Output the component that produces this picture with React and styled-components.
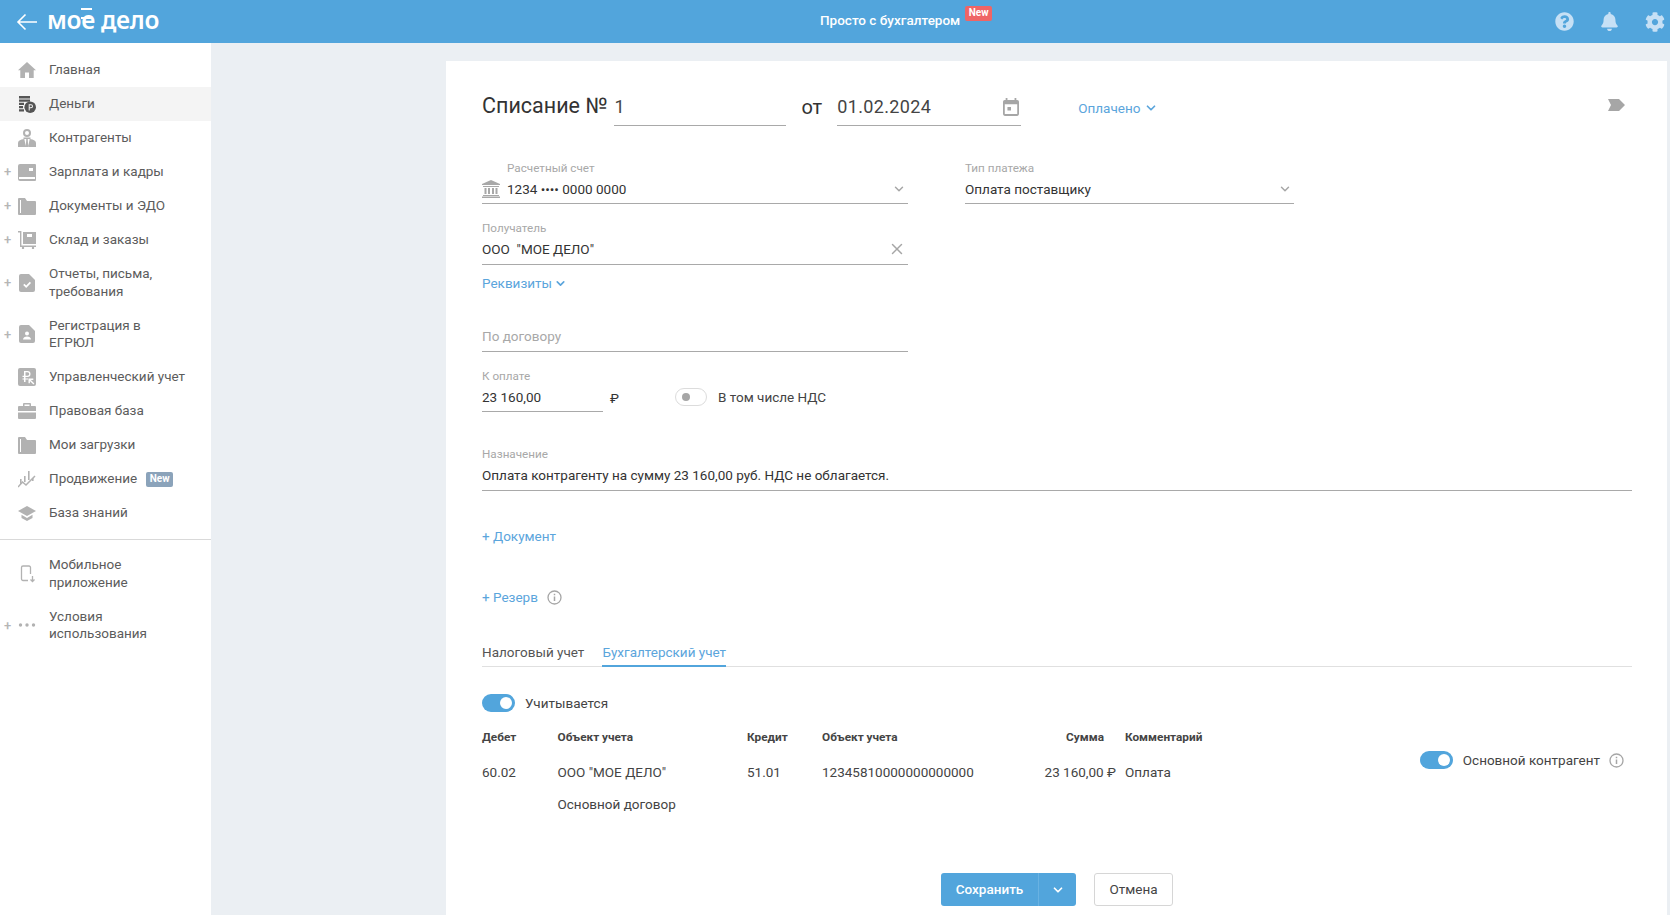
import styled, { createGlobalStyle } from "styled-components";
import { ChevronDown, X } from "lucide-react";
import { FaBell, FaCog, FaQuestionCircle } from "react-icons/fa";

const GlobalStyle = createGlobalStyle`
    html, body {
        margin: 0;
        height: 100%;
        overflow: hidden;
        font-family: Roboto, "Liberation Sans", sans-serif;
        font-size: 13.5px;
        color: #333;
    }
    * { box-sizing: border-box; }
`;

const Page = styled.div`
    width: 1670px;
    height: 915px;
    display: flex;
    flex-direction: column;
    background: #ebeff3;
`;

const Header = styled.header`
    height: 43px;
    flex: none;
    display: flex;
    align-items: center;
    background: #52a5dc;
    color: #fff;
`;

const HeaderLeft = styled.div`
    width: 820px;
    display: flex;
    align-items: center;
    padding-left: 16px;
    gap: 9px;
`;

const Logo = styled.div`
    position: relative;
    font-family: "Noto Sans", sans-serif;
    font-size: 24.5px;
    font-weight: 600;
    line-height: 36px;
    letter-spacing: -0.3px;
    margin-top: -4px;

    &::before {
        content: "";
        position: absolute;
        left: 34px;
        top: 6px;
        width: 11px;
        height: 7px;
        border-top: 2px solid #fff;
        border-bottom: 2px solid #fff;
    }
`;

const HeaderTitle = styled.div`
    font-weight: 500;
    line-height: 20px;
    margin-top: -3px;
`;

const NewBadge = styled.span`
    align-self: flex-start;
    margin: 6px 0 0 5px;
    padding: 0 3.5px;
    height: 15px;
    border-radius: 2px;
    font-size: 10px;
    font-weight: 700;
    line-height: 13px;
    background: #ef6566;
    color: #fff;
`;

const NavBadge = styled(NewBadge)`
    align-self: center;
    margin: 0 0 0 9px;
    background: #8ba3ba;
`;

const HeaderRight = styled.div`
    margin-left: auto;
    display: flex;
    align-items: center;
    gap: 26px;
    padding-right: 5px;
    color: #c6e0f5;
    font-size: 19px;

    svg { display: block; }
`;

const Body = styled.div`
    flex: 1;
    display: flex;
    min-height: 0;
`;

const Sidebar = styled.nav`
    width: 211px;
    flex: none;
    background: #fff;
    padding-top: 10px;
`;

const NavRow = styled.div`
    height: ${(p) => (p.$tall ? 51.5 : 34)}px;
    display: flex;
    align-items: center;
    background: ${(p) => (p.$active ? "#f4f4f4" : "transparent")};
    color: #5c5c5c;
    line-height: 17.5px;
`;

const Plus = styled.span`
    width: 18px;
    flex: none;
    padding-left: 4px;
    color: #b5b5b5;
    font-size: 13px;
    font-weight: 500;
`;

const NavIcon = styled.svg`
    width: 18px;
    height: 18px;
    flex: none;
    margin-right: 13px;
    fill: #b2b2b2;
`;

const NavLabel = styled.span`
    white-space: pre-line;
`;

const NavDivider = styled.div`
    height: 1px;
    margin: 9px 0 8px;
    background: #d9d9d9;
`;

const Content = styled.main`
    flex: 1;
    padding: 18px 3px 0 235px;
    min-width: 0;
`;

const Card = styled.div`
    height: 100%;
    background: #fff;
    padding: 25px 35px 0 36px;
`;

const TitleRow = styled.div`
    height: 40px;
    display: flex;
    align-items: flex-end;
`;

const Title = styled.h1`
    margin: 0 7px 0 0;
    font-size: 21.5px;
    font-weight: 400;
    line-height: 30px;
    padding-bottom: 5px;
    color: #333;
`;

const TitleInput = styled.div`
    width: ${(p) => p.$w}px;
    height: 40px;
    display: flex;
    align-items: center;
    justify-content: space-between;
    padding-top: 2px;
    font-size: 18px;
    letter-spacing: 0.35px;
    color: #444;
    border-bottom: 1px solid #a9a9a9;
`;

const From = styled.span`
    margin: 0 15px;
    font-size: 20px;
    line-height: 30px;
    padding-bottom: 4px;
`;

const CalendarIcon = styled.svg`
    width: 16px;
    height: 18px;
    margin-right: 2px;
    fill: #a6a6a6;
`;

const StatusLink = styled.a`
    display: flex;
    align-items: center;
    gap: 4px;
    margin-left: 57px;
    padding-bottom: 8px;
    color: #5ba5dc;
    line-height: 20px;
`;

const TagIcon = styled.svg`
    width: 17px;
    height: 12px;
    margin: 0 7px 15px auto;
    fill: #a6a6a6;
`;

const FieldRow = styled.div`
    display: flex;
    align-items: ${(p) => p.$align || "flex-start"};
    margin-top: ${(p) => p.$top || 0}px;
`;

const Field = styled.div`
    width: ${(p) => (p.$w ? `${p.$w}px` : "100%")};
    flex: ${(p) => (p.$w ? "none" : "1")};
    margin-top: ${(p) => p.$top || 0}px;
    margin-left: ${(p) => p.$left || 0}px;
    border-bottom: 1px solid #a9a9a9;
    padding-bottom: ${(p) => p.$pb || 4}px;
`;

const FieldLabel = styled.div`
    height: 14px;
    margin-bottom: 4px;
    margin-left: ${(p) => p.$indent || 0}px;
    font-size: 11.7px;
    line-height: 14px;
    color: #a8a8a8;
`;

const FieldValue = styled.div`
    height: 20px;
    display: flex;
    align-items: center;
    line-height: 20px;
    color: ${(p) => (p.$muted ? "#a8a8a8" : "#333")};

    > svg:last-child {
        margin-left: auto;
        margin-right: 2px;
        color: #a6a6a6;
    }
`;

const BankIcon = styled.svg`
    width: 18px;
    height: 18px;
    flex: none;
    margin-right: 7px;
    fill: #a8a8a8;
`;

const LinkLine = styled.a`
    display: flex;
    align-items: center;
    height: 20px;
    gap: ${(p) => p.$gap || 2}px;
    margin-top: ${(p) => p.$top || 0}px;
    color: #5ba5dc;
`;

const InfoIcon = styled.svg`
    width: 15px;
    height: 15px;
    flex: none;
    margin-left: ${(p) => p.$left || 0}px;
    fill: none;
    stroke: #a6a6a6;
`;

const Ruble = styled.span`
    margin-left: 7px;
    width: 65px;
    line-height: 20px;
    padding-bottom: 4px;
`;

const ToggleTrack = styled.span`
    position: relative;
    display: block;
    flex: none;
    width: ${(p) => (p.$on ? 33 : 32)}px;
    height: 18px;
    border-radius: 9px;
    margin-bottom: ${(p) => p.$mb || 0}px;
    background: ${(p) => (p.$on ? "#52a5dc" : "#fff")};
    border: ${(p) => (p.$on ? "none" : "1px solid #dcdcdc")};

    &::after {
        content: "";
        position: absolute;
        top: ${(p) => (p.$on ? 3 : 4)}px;
        left: ${(p) => (p.$on ? 18 : 6)}px;
        width: ${(p) => (p.$on ? 12 : 8)}px;
        height: ${(p) => (p.$on ? 12 : 8)}px;
        border-radius: 50%;
        background: ${(p) => (p.$on ? "#fff" : "#a6a6a6")};
    }
`;

const ToggleText = styled.span`
    margin-left: ${(p) => p.$left || 10}px;
    padding-bottom: ${(p) => p.$pb || 0}px;
    line-height: 20px;
    color: #444;
`;

const Tabs = styled.div`
    display: flex;
    gap: 18px;
    height: 25px;
    margin-top: 35px;
    border-bottom: 1px solid #e0e0e0;
`;

const Tab = styled.div`
    height: 25px;
    line-height: 20px;
    color: ${(p) => (p.$active ? "#5ba5dc" : "#555")};
    border-bottom: ${(p) => (p.$active ? "2px solid #52a5dc" : "none")};
`;

const ToggleRow = styled.div`
    display: flex;
    align-items: center;
    height: 18px;
    margin-top: 27px;
`;

const Postings = styled.div`
    display: flex;
    justify-content: space-between;
    align-items: flex-start;
    margin-top: 17px;
    padding-right: 8px;
`;

const PostingGrid = styled.div`
    display: grid;
    grid-template-columns: 75.5px 189.5px 75px 182px 112px auto;
`;

const HeadCell = styled.div`
    height: 16px;
    margin-bottom: 17px;
    font-size: 11.8px;
    font-weight: 700;
    line-height: 16px;
    color: #444;
    text-align: ${(p) => (p.$right ? "right" : "left")};
    padding-right: ${(p) => (p.$right ? 12 : 0)}px;
    padding-left: ${(p) => (p.$pad ? 9 : 0)}px;
`;

const Cell = styled.div`
    height: 20px;
    line-height: 20px;
    color: #444;
    white-space: nowrap;
    text-align: ${(p) => (p.$right ? "right" : "left")};
    padding-left: ${(p) => (p.$pad ? 9 : 0)}px;
`;

const SecondLine = styled(Cell)`
    grid-column: 2;
    margin-top: 12px;
`;

const MainPartner = styled.div`
    display: flex;
    align-items: center;
    height: 18px;
    margin-top: 22px;
`;

const Actions = styled.div`
    display: flex;
    justify-content: center;
    gap: 18px;
    margin-top: 59px;
`;

const SaveGroup = styled.div`
    display: flex;
    height: 33px;
    border-radius: 3px;
    overflow: hidden;
    background: #52a5dc;
    color: #fff;
`;

const SaveButton = styled.div`
    width: 98px;
    display: flex;
    align-items: center;
    justify-content: center;
    padding-bottom: 1px;
    font-weight: 500;
    border-right: 1px solid #69b2e2;
`;

const SaveArrow = styled.div`
    width: 37px;
    display: flex;
    align-items: center;
    justify-content: center;
`;

const CancelButton = styled.div`
    width: 79px;
    height: 33px;
    display: flex;
    align-items: center;
    justify-content: center;
    padding-bottom: 1px;
    border: 1px solid #d6d6d6;
    border-radius: 3px;
    color: #444;
`;

const icons = {
    home: <path d="M9 1l9 8.200h-2.300V17H11v-5.500H7V17H2.300V9.200H0z" />,
    money: (
        <g fill="#555">
            <path d="M1 1h11v2.400H1zM1 4.400h11v2.400H1zM1 7.800h5v2.200H1zM1 11h4v2.200H1zM1 14.200h5v2.400H1z" />
            <circle cx="12.200" cy="12.200" r="5.800" />
            <path fill="#f4f4f4" d="M10.700 9.200h2.300a2 2 0 010 4h-1.300V15.400h-1zm1 1v2h1.300a1 1 0 000-2z" />
        </g>
    ),
    person: (
        <g>
            <path fillRule="evenodd" d="M9 0a4 4 0 110 8 4 4 0 010-8zm0 2a2 2 0 100 4 2 2 0 000-4z" />
            <path d="M5.500 8.600h7v1.400h-7zM0 18v-4c0-2 2-3.400 6.300-4L8 18zM18 18v-4c0-2-2-3.400-6.300-4L10 18zM8.300 10h1.400l.6 8H7.700z" />
        </g>
    ),
    wallet: (
        <path fillRule="evenodd" d="M2 1h15a1 1 0 011 1v15a1 1 0 01-1 1H2a2 2 0 01-2-2V3a2 2 0 012-2zm9 4v3h4V5zm-10 9v2h16v-2z" />
    ),
    folder: <path d="M1 1h6l2 3h8a1 1 0 011 1v12a1 1 0 01-1 1H1a1 1 0 01-1-1V2a1 1 0 011-1zm1 2v13h1V3z" fillRule="evenodd" />,
    cart: (
        <g>
            <path d="M0 0h3.400v14.500H18V16H2V1.500H0z" />
            <path fillRule="evenodd" d="M5 1h13v12H5zm4 2v3h5V3z" />
            <circle cx="5" cy="17" r="1.200" />
            <circle cx="15" cy="17" r="1.200" />
        </g>
    ),
    report: (
        <g>
            <path d="M3 0h8l6 6v10a2 2 0 01-2 2H3a2 2 0 01-2-2V2a2 2 0 012-2z" />
            <path d="M5.200 11l1.200-1.200 1.800 1.800 3.600-3.800 1.200 1.200-4.800 5z" fill="#fff" />
        </g>
    ),
    registration: (
        <g>
            <path d="M3 0h8l6 6v10a2 2 0 01-2 2H3a2 2 0 01-2-2V2a2 2 0 012-2z" />
            <circle cx="9" cy="8.500" r="2" fill="#fff" />
            <path d="M5 14.500c0-2 2-3 4-3s4 1 4 3z" fill="#fff" />
        </g>
    ),
    management: (
        <g>
            <rect width="18" height="18" rx="2" />
            <path d="M6 3h3.500a3 3 0 010 6H7.500v1.400h2.600v1.200H7.500V14H6v-2.400H4.500v-1.200H6V9H4.500V7.800H6zm1.500 1.300v3.500h2a1.750 1.750 0 000-3.500z" fill="#fff" />
            <path d="M10.500 10.500h4.800v1.400h-2.400l3.500 3.500-1 1-3.500-3.500v2.400h-1.400z" fill="#fff" />
        </g>
    ),
    case: (
        <path d="M6 1h6a1 1 0 011 1v2h4a1 1 0 011 1v4H0V5a1 1 0 011-1h4V2a1 1 0 011-1zm.5 1.500V4h5V2.500zM0 10.500h18V16a1 1 0 01-1 1H1a1 1 0 01-1-1z" fillRule="evenodd" />
    ),
    chart: (
        <g>
            <path d="M2 9h1.600v5H2zM6 6h1.600v6H6zM10 1h1.600v9H10zM14 8h1.600v3H14z" />
            <path d="M0 17l4.500-5 3.500 3 9-9" fill="none" stroke="#b2b2b2" strokeWidth="1.500" />
        </g>
    ),
    cap: (
        <g>
            <path d="M9 2l9 5-9 5-9-5z" />
            <path d="M3.500 10.800L9 14l5.500-3.200V14L9 17l-5.500-3z" />
        </g>
    ),
    mobile: (
        <g fill="none" stroke="#b2b2b2" strokeWidth="1.300">
            <path d="M10 15.500H5a1.500 1.500 0 01-1.500-1.500V2.500A1.500 1.500 0 015 1h6a1.500 1.500 0 011.500 1.500V9" />
            <path d="M14.500 11v5.500M12.500 14.500l2 2 2-2" />
        </g>
    ),
    dots: (
        <g>
            <circle cx="2.500" cy="9" r="1.700" />
            <circle cx="9" cy="9" r="1.700" />
            <circle cx="15.500" cy="9" r="1.700" />
        </g>
    ),
};

const menu = [
    { icon: "home", text: "Главная" },
    { icon: "money", text: "Деньги", active: true },
    { icon: "person", text: "Контрагенты" },
    { icon: "wallet", text: "Зарплата и кадры", plus: true },
    { icon: "folder", text: "Документы и ЭДО", plus: true },
    { icon: "cart", text: "Склад и заказы", plus: true },
    { icon: "report", text: "Отчеты, письма,\nтребования", plus: true, tall: true },
    { icon: "registration", text: "Регистрация в\nЕГРЮЛ", plus: true, tall: true },
    { icon: "management", text: "Управленческий учет" },
    { icon: "case", text: "Правовая база" },
    { icon: "folder", text: "Мои загрузки" },
    { icon: "chart", text: "Продвижение", badge: true },
    { icon: "cap", text: "База знаний" },
];

const bottomMenu = [
    { icon: "mobile", text: "Мобильное\nприложение", tall: true },
    { icon: "dots", text: "Условия\nиспользования", plus: true, tall: true },
];

function MenuItem({ item }) {
    return (
        <NavRow $active={item.active} $tall={item.tall}>
            <Plus>{item.plus ? "+" : ""}</Plus>
            <NavIcon viewBox="0 0 18 18">{icons[item.icon]}</NavIcon>
            <NavLabel>{item.text}</NavLabel>
            {item.badge && <NavBadge>New</NavBadge>}
        </NavRow>
    );
}

function Info({ left }) {
    return (
        <InfoIcon $left={left} viewBox="0 0 15 15">
            <circle cx="7.500" cy="7.500" r="6.500" strokeWidth="1.300" />
            <path d="M7.500 6.500v4.500M7.500 3.800v1.500" strokeWidth="1.500" />
        </InfoIcon>
    );
}

export default function App() {
    return (
        <Page>
            <GlobalStyle />
            <Header>
                <HeaderLeft>
                    <svg width="22" height="18" viewBox="0 0 22 18" fill="none" stroke="#fff" strokeWidth="1.600">
                        <path d="M21 9H2M9.500 1.500L2 9l7.500 7.500" />
                    </svg>
                    <Logo>мое дело</Logo>
                </HeaderLeft>
                <HeaderTitle>Просто с бухгалтером</HeaderTitle>
                <NewBadge>New</NewBadge>
                <HeaderRight>
                    <FaQuestionCircle />
                    <FaBell />
                    <FaCog size={20} />
                </HeaderRight>
            </Header>
            <Body>
                <Sidebar>
                    {menu.map((item) => (
                        <MenuItem key={item.text} item={item} />
                    ))}
                    <NavDivider />
                    {bottomMenu.map((item) => (
                        <MenuItem key={item.text} item={item} />
                    ))}
                </Sidebar>
                <Content>
                    <Card>
                        <TitleRow>
                            <Title>Списание №</Title>
                            <TitleInput $w={172}>1</TitleInput>
                            <From>от</From>
                            <TitleInput $w={184}>
                                01.02.2024
                                <CalendarIcon viewBox="0 0 18 20">
                                    <path fillRule="evenodd" d="M3 0h2v2h8V0h2v2h1a2 2 0 012 2v14a2 2 0 01-2 2H2a2 2 0 01-2-2V4a2 2 0 012-2h1zM2 7v11h14V7zm3 3h4v4H5z" />
                                </CalendarIcon>
                            </TitleInput>
                            <StatusLink>
                                Оплачено
                                <ChevronDown size={14} strokeWidth={3} />
                            </StatusLink>
                            <TagIcon viewBox="0 0 17 12">
                                <path d="M0 0h11l6 6-6 6H0l3-6z" />
                            </TagIcon>
                        </TitleRow>

                        <FieldRow $top={35}>
                            <Field $w={426}>
                                <FieldLabel $indent={25}>Расчетный счет</FieldLabel>
                                <FieldValue>
                                    <BankIcon viewBox="0 0 18 18">
                                        <path d="M9 0l9 4v1H0V4zM1 6h16v1H1zM2.500 8h2v6h-2zM6 8h2v6H6zM10 8h2v6h-2zM13.500 8h2v6h-2zM1 15h16v1H1zM0 16.500h18V18H0z" />
                                    </BankIcon>
                                    1234 •••• 0000 0000
                                    <ChevronDown size={14} strokeWidth={2.5} />
                                </FieldValue>
                            </Field>
                            <Field $w={329} $left={57}>
                                <FieldLabel>Тип платежа</FieldLabel>
                                <FieldValue>
                                    Оплата поставщику
                                    <ChevronDown size={14} strokeWidth={2.5} />
                                </FieldValue>
                            </Field>
                        </FieldRow>

                        <Field $w={426} $top={17} $pb={5}>
                            <FieldLabel>Получатель</FieldLabel>
                            <FieldValue>
                                ООО &nbsp;"МОЕ ДЕЛО"
                                <X size={18} />
                            </FieldValue>
                        </Field>

                        <LinkLine $top={8}>
                            Реквизиты
                            <ChevronDown size={13} strokeWidth={3} />
                        </LinkLine>

                        <Field $w={426} $top={33} $pb={5}>
                            <FieldValue $muted>По договору</FieldValue>
                        </Field>

                        <FieldRow $top={17} $align="flex-end">
                            <Field $w={121}>
                                <FieldLabel>К оплате</FieldLabel>
                                <FieldValue>23 160,00</FieldValue>
                            </Field>
                            <Ruble>₽</Ruble>
                            <ToggleTrack $mb={6} />
                            <ToggleText $pb={5} $left={11}>
                                В том числе НДС
                            </ToggleText>
                        </FieldRow>

                        <Field $top={35} $pb={5}>
                            <FieldLabel>Назначение</FieldLabel>
                            <FieldValue>Оплата контрагенту на сумму 23 160,00 руб. НДС не облагается.</FieldValue>
                        </Field>

                        <LinkLine $top={35}>+ Документ</LinkLine>
                        <LinkLine $top={41} $gap={9}>
                            + Резерв
                            <Info />
                        </LinkLine>

                        <Tabs>
                            <Tab>Налоговый учет</Tab>
                            <Tab $active>Бухгалтерский учет</Tab>
                        </Tabs>

                        <ToggleRow>
                            <ToggleTrack $on />
                            <ToggleText>Учитывается</ToggleText>
                        </ToggleRow>

                        <Postings>
                            <PostingGrid>
                                <HeadCell>Дебет</HeadCell>
                                <HeadCell>Объект учета</HeadCell>
                                <HeadCell>Кредит</HeadCell>
                                <HeadCell>Объект учета</HeadCell>
                                <HeadCell $right>Сумма</HeadCell>
                                <HeadCell $pad>Комментарий</HeadCell>
                                <Cell>60.02</Cell>
                                <Cell>ООО "МОЕ ДЕЛО"</Cell>
                                <Cell>51.01</Cell>
                                <Cell>12345810000000000000</Cell>
                                <Cell $right>23 160,00 ₽</Cell>
                                <Cell $pad>Оплата</Cell>
                                <SecondLine>Основной договор</SecondLine>
                            </PostingGrid>
                            <MainPartner>
                                <ToggleTrack $on />
                                <ToggleText>Основной контрагент</ToggleText>
                                <Info left={9} />
                            </MainPartner>
                        </Postings>

                        <Actions>
                            <SaveGroup>
                                <SaveButton>Сохранить</SaveButton>
                                <SaveArrow>
                                    <ChevronDown size={14} strokeWidth={3} />
                                </SaveArrow>
                            </SaveGroup>
                            <CancelButton>Отмена</CancelButton>
                        </Actions>
                    </Card>
                </Content>
            </Body>
        </Page>
    );
}
